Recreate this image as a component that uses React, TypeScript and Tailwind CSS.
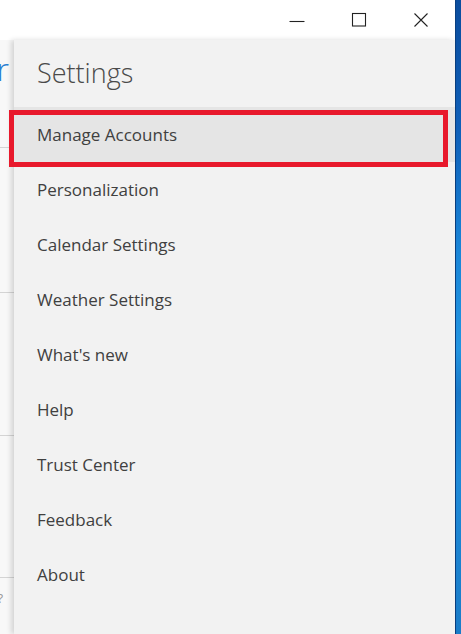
import React from 'react';

const items = [
  'Manage Accounts',
  'Personalization',
  'Calendar Settings',
  'Weather Settings',
  "What's new",
  'Help',
  'Trust Center',
  'Feedback',
  'About',
];

const font = { fontFamily: '"Open Sans", "Noto Sans", sans-serif' };

export default function App() {
  return (
    <div className="flex w-[461px] h-[634px] overflow-hidden bg-white" style={font}>
      {/* App window */}
      <div className="flex flex-col w-[455px] h-full">
        {/* Title bar */}
        <div className="flex justify-end h-[40px] bg-white pr-[3px] shrink-0">
          <button className="w-[62px] h-full flex items-center justify-center text-[#222]">
            <svg width="16" height="16" viewBox="0 0 16 16">
              <path d="M0.5 9.5h15" stroke="currentColor" strokeWidth="1.1" />
            </svg>
          </button>
          <button className="w-[62px] h-full flex items-center justify-center text-[#222]">
            <svg width="16" height="16" viewBox="0 0 16 16">
              <rect x="1.5" y="1.5" width="13" height="12.5" fill="none" stroke="currentColor" strokeWidth="1.1" />
            </svg>
          </button>
          <button className="w-[62px] h-full flex items-center justify-center text-[#222]">
            <svg width="16" height="16" viewBox="0 0 16 16">
              <path d="M1.5 1.5l13 13M14.5 1.5l-13 13" stroke="currentColor" strokeWidth="1.1" />
            </svg>
          </button>
        </div>

        <div className="flex flex-1 min-h-0">
          {/* Background app content peeking out */}
          <div className="w-[14px] shrink-0 bg-[#f8f8f8] flex flex-col overflow-hidden">
            <div className="h-[45px] flex items-start justify-end pt-[13px] overflow-hidden">
              <span className="text-[32px] leading-none text-[#2a7fd2] mr-[5px] font-light">r</span>
            </div>
            <div className="h-[62px]" />
            <div className="h-px bg-[#d4d4d4]" />
            <div className="h-[144px]" />
            <div className="h-px bg-[#d4d4d4]" />
            <div className="h-[142px]" />
            <div className="h-px bg-[#d4d4d4]" />
            <div className="h-[141px]" />
            <div className="h-px bg-[#d4d4d4]" />
            <div className="h-[40px] flex items-center justify-end overflow-hidden">
              <span className="text-[13px] leading-none text-[#9a9a9a] mr-[11px]">?</span>
            </div>
          </div>

          {/* Settings flyout */}
          <div className="flex-1 bg-[#f2f2f2] shadow-[-3px_0_5px_rgba(0,0,0,0.14)] flex flex-col z-10">
            <div className="h-[67px] flex items-center pl-[23px] pb-[3px]">
              <h1 className="text-[27px] font-light text-[#4a4a4a] leading-none">Settings</h1>
            </div>
            {items.map((item, i) => (
              <div
                key={item}
                className={`relative h-[55px] flex items-center pl-[23px] text-[17px] text-[#404040] ${
                  i === 0 ? 'bg-[#e5e5e5]' : ''
                }`}
              >
                {item}
                {i === 0 && (
                  <div className="absolute -left-[5px] right-[7px] top-[3px] -bottom-[5px] border-[5px] border-[#e8192c] pointer-events-none" />
                )}
              </div>
            ))}
          </div>
        </div>
      </div>

      {/* Desktop wallpaper edge */}
      <div className="w-[6px] h-full bg-[linear-gradient(180deg,#0b4d9e_0%,#0f5fb8_20%,#1a86d8_40%,#2294e0_55%,#1878c8_62%,#1f8ad8_75%,#1a7cc8_100%)] border-l border-[#0a3f80]" />
    </div>
  );
}
